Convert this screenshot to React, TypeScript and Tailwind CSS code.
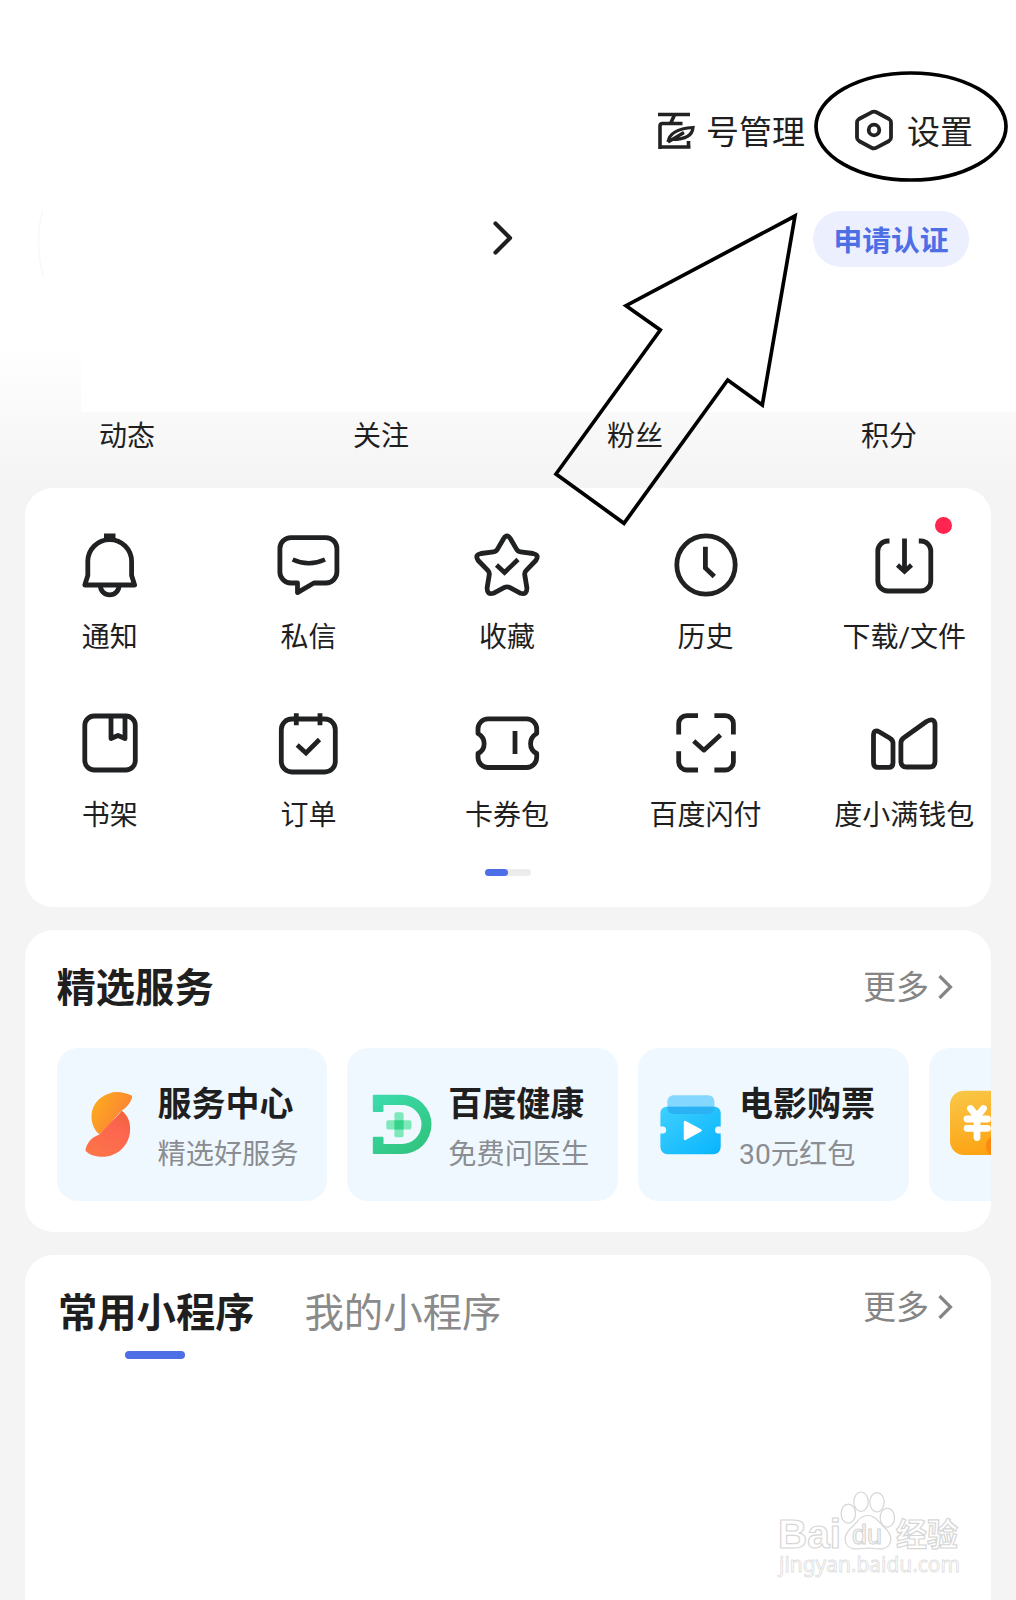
import type { ReactNode } from 'react';

const stroke = {
  fill: 'none',
  stroke: '#202122',
  strokeWidth: 4.8,
} as const;

function Glyph({ children }: { children: ReactNode }) {
  return (
    <svg className="size-[72px] shrink-0 overflow-visible" viewBox="0 0 72 72" {...stroke}>
      {children}
    </svg>
  );
}

const shortcuts: { label: string; icon: ReactNode; dot?: boolean }[] = [
  {
    label: '通知',
    icon: (
      <>
        <path d="M30 7.2h11.500" strokeWidth="5.500" />
        <path d="M10.800 56 13.800 46.500V32.500a21.900 21.900 0 0 1 43.800 0V46.500L60.600 56Z" strokeLinejoin="round" />
        <path d="M26.400 57a9.300 8.900 0 0 0 18.600 0" />
      </>
    ),
  },
  {
    label: '私信',
    icon: (
      <>
        <path
          d="M18.900 8.600H53.900a11 11 0 0 1 11 11V43a11 11 0 0 1-11 11H41.900L25.500 63.600V54H18.900a11 11 0 0 1-11-11V19.600a11 11 0 0 1 11-11Z"
          strokeLinejoin="round"
        />
        <path d="M20.700 30.500Q36.700 38.100 53 30.500" strokeWidth="4.600" />
      </>
    ),
  },
  {
    label: '收藏',
    icon: (
      <>
        <path
          d="M32.700 9.500Q36 4.500 39.300 9.500L45.500 20.100Q46.800 22.500 49.500 22.900L62 24.500Q68.700 26 64.800 31.500L55.300 41.300Q53.400 43.200 53.700 45.500L55.900 59Q56 66 49.700 64.300L38.500 58.400Q36 57.200 33.500 58.400L22.300 64.300Q16 66 16.100 59L18.300 45.500Q18.600 43.200 16.700 41.300L7.200 31.500Q3.300 26 10 24.500L22.500 22.900Q25.200 22.500 26.500 20.100Z"
          strokeLinejoin="round"
        />
        <path d="M25.500 36 33.500 43.500 47 30.500" strokeWidth="4.600" />
      </>
    ),
  },
  {
    label: '历史',
    icon: (
      <>
        <circle cx="36" cy="36" r="29.200" />
        <path d="M35.400 17.800V39L44.300 47.500" />
      </>
    ),
  },
  {
    label: '下载/文件',
    dot: true,
    icon: (
      <>
        <path d="M21.500 12H19.800a10 10 0 0 0-10 10V52a10 10 0 0 0 10 10H52.800a10 10 0 0 0 10-10V22a10 10 0 0 0-10-10H50.800" />
        <path d="M36.500 9.600V40" />
        <path d="M29.500 36 36.500 42.500 43.500 36" strokeWidth="4.500" />
      </>
    ),
  },
  {
    label: '书架',
    icon: (
      <>
        <rect x="10.800" y="9" width="50.500" height="54" rx="9.500" />
        <path d="M37 9V31.500L44 28.500 51 31.500V9" strokeLinejoin="round" />
      </>
    ),
  },
  {
    label: '订单',
    icon: (
      <>
        <rect x="9.300" y="12" width="54" height="53" rx="10.500" />
        <path d="M24.300 6.300v12M48 6.300v12" />
        <path d="M25.200 38 34 46 47.500 32.500" strokeWidth="4.600" />
      </>
    ),
  },
  {
    label: '卡券包',
    icon: (
      <>
        <path
          d="M17 11.900H55.700a10 10 0 0 1 10 10V26.500C57.500 31.200 57.500 42.200 65.700 46.500V50.500a10 10 0 0 1-10 10H17a10 10 0 0 1-10-10V46.500C15.200 42.200 15.200 31.200 7 26.500V21.900a10 10 0 0 1 10-10Z"
          strokeLinejoin="round"
        />
        <path d="M44 24v23" />
      </>
    ),
  },
  {
    label: '百度闪付',
    icon: (
      <>
        <path d="M8.700 27.600V16.600a8 8 0 0 1 8-8H28M44.400 8.600H55.400a8 8 0 0 1 8 8v11M8.700 44.300v10.700a8 8 0 0 0 8 8H28M44.400 63H55.400a8 8 0 0 0 8-8V44.300" />
        <path d="M23.700 34 33.900 43.200 50.500 28" strokeWidth="4.600" strokeLinejoin="round" />
      </>
    ),
  },
  {
    label: '度小满钱包',
    icon: (
      <>
        <path
          d="M5.500 28Q6 22 11.500 25L22 31.300Q25 33 25 36V55.700Q25 60.400 20.500 60.400H10Q5.500 60.400 5.500 55.700Z"
          strokeLinejoin="round"
        />
        <path
          d="M32.900 36Q32.900 33 35.500 31L58.500 14.500Q66.800 10 67 18V54.200Q67 60 61.500 60H38.500Q32.900 60 32.900 54.200Z"
          strokeLinejoin="round"
        />
      </>
    ),
  },
];

function ServiceIcon({ children }: { children: ReactNode }) {
  return (
    <svg className="size-[72px] shrink-0" viewBox="0 0 72 72">
      {children}
    </svg>
  );
}

const services: { title: string; sub: string; icon: ReactNode }[] = [
  {
    title: '服务中心',
    sub: '精选好服务',
    icon: (
      <>
        <defs>
          <linearGradient id="s1" x1="0" y1="0.200" x2="1" y2="0.800">
            <stop offset="0" stopColor="#fdac1c" />
            <stop offset="1" stopColor="#fb7a3d" />
          </linearGradient>
          <linearGradient id="s2" x1="0.900" y1="0" x2="0.300" y2="1">
            <stop offset="0" stopColor="#ee6238" />
            <stop offset="0.350" stopColor="#fd6550" />
            <stop offset="1" stopColor="#fc7448" />
          </linearGradient>
        </defs>
        <path d="M47.700 22.700C54 27 57 35 56 44C54.500 59 41 71 24 68.500Q16 67.500 11.700 63Q11 60 14.500 54.500Q18 49 25.500 46.500Q30 41 34 36Q43 29 47.700 22.700Z" fill="url(#s2)" />
        <path d="M57.700 7.600C50 4 42 2.800 35 5.400C23 9.500 17 19 17.500 30C18 37 21 43 25.500 46.500Q30 41 35 36.500C40 31 44.500 25.500 47.700 22.700Q55 18 57.900 10.500Q58.500 8.500 57.700 7.600Z" fill="url(#s1)" />
      </>
    ),
  },
  {
    title: '百度健康',
    sub: '免费问医生',
    icon: (
      <>
        <defs>
          <linearGradient id="d1" x1="0" y1="0" x2="0.700" y2="1">
            <stop offset="0" stopColor="#3bdcae" />
            <stop offset="1" stopColor="#31c47e" />
          </linearGradient>
        </defs>
        <path
          d="M8.800 8Q8.800 6.700 10 6.700H37.800a29.700 29.700 0 0 1 0 59.400H10Q8.800 66.100 8.800 65V50Q8.800 48.700 10 48.700H18.300Q19.500 48.700 19.500 50V56H38a19.500 19.500 0 0 0 0-39H19.500V23Q19.500 24 18.300 24H10Q8.800 24 8.800 23Z"
          fill="url(#d1)"
        />
        <rect x="22.300" y="32.200" width="25.200" height="9.300" rx="1.800" fill="#7ee8bb" />
        <rect x="30.400" y="24.300" width="9.200" height="25" rx="1.800" fill="#7ee8bb" />
        <rect x="30.400" y="32.200" width="9.200" height="9.300" fill="#35d48a" />
      </>
    ),
  },
  {
    title: '电影购票',
    sub: '30元红包',
    icon: (
      <>
        <defs>
          <linearGradient id="m1" x1="0" y1="0" x2="1" y2="1">
            <stop offset="0" stopColor="#3fd0ff" />
            <stop offset="1" stopColor="#08b4fd" />
          </linearGradient>
        </defs>
        <rect x="12.400" y="7.300" width="47" height="18.700" rx="6" fill="#84d8ff" />
        <path
          d="M11.400 18.700H59.700a6 6 0 0 1 6 6V38.500H62.500Q60 39 60 42Q60 45 62.500 45.500H65.700V59a7.300 7.300 0 0 1-7.300 7.300H12.700A7.300 7.300 0 0 1 5.400 59V45.500H8.600Q11.200 45 11.200 42Q11.200 39 8.600 38.500H5.400V24.700a6 6 0 0 1 6-6Z"
          fill="url(#m1)"
        />
        <path d="M12.400 18.700H59.400V20a6 6 0 0 1-6 6H18.400a6 6 0 0 1-6-6Z" fill="#2ab2f5" />
        <path d="M30 34 45.500 42.300 30 51Z" fill="#fff" stroke="#fff" strokeWidth="2.500" strokeLinejoin="round" />
      </>
    ),
  },
  {
    title: '',
    sub: '',
    icon: (
      <>
        <defs>
          <linearGradient id="y1" x1="0" y1="0" x2="0.300" y2="1">
            <stop offset="0" stopColor="#f9c84a" />
            <stop offset="1" stopColor="#fda414" />
          </linearGradient>
        </defs>
        <rect x="4" y="2.700" width="64" height="64.300" rx="14" fill="url(#y1)" />
        <circle cx="51" cy="58" r="11" fill="#fb8a10" />
        <path
          d="M24.500 20.500 31 28.500 37.500 20.500M21 31H41.500M21 40.300H41.500M31 29V49.500"
          fill="none"
          stroke="#fff"
          strokeWidth="6.800"
          strokeLinecap="round"
          strokeLinejoin="round"
        />
      </>
    ),
  },
];

function More() {
  return (
    <div className="flex items-center gap-[9px] text-[33px] leading-[48px] text-[#858585]">
      <span className="pt-[3px]">更多</span>
      <svg className="h-[26px] w-[15px]" viewBox="0 0 15 26" fill="none" stroke="#858585" strokeWidth="3.200">
        <path d="M1.500 2 12.500 13 1.500 24" />
      </svg>
    </div>
  );
}

function Watermark() {
  return (
    <svg
      className="absolute top-[1486px] left-[774px] h-[96px] w-[192px]"
      viewBox="0 0 192 96"
      fill="#fff"
      stroke="#d6d6d6"
      strokeWidth="1.200"
      fontFamily='"Liberation Sans", "Noto Sans CJK SC", sans-serif'
      fontWeight="bold"
    >
      <text x="4" y="62" fontSize="41" textLength="63" lengthAdjust="spacingAndGlyphs">Bai</text>
      <ellipse cx="74.300" cy="27.700" rx="7.200" ry="9.500" />
      <ellipse cx="87" cy="15.700" rx="7.200" ry="9.700" />
      <ellipse cx="103" cy="16.300" rx="7.200" ry="9.700" />
      <ellipse cx="113.300" cy="31.700" rx="7.200" ry="9.500" />
      <path d="M93.500 29.500C101 29.500 104 35 109 40C117 47 119 53 115 59C111 64.500 103 63 94 62C85 63 77 64.500 73 59C69 53 71 47 79 40C84 35 87 29.500 93.500 29.500Z" />
      <text x="78" y="58" fontSize="27" fontWeight="normal" textLength="30" lengthAdjust="spacingAndGlyphs">du</text>
      <text x="122" y="59.500" fontSize="32" textLength="62" lengthAdjust="spacingAndGlyphs">经验</text>
      <text x="5" y="86" fontSize="21.500" fontWeight="normal" strokeWidth="0.900" stroke="#dfdfdf" textLength="181" lengthAdjust="spacingAndGlyphs" fontFamily='"Noto Sans", sans-serif'>
        jingyan.baidu.com
      </text>
    </svg>
  );
}

export default function App() {
  return (
    <div className="relative flex h-[1600px] w-[1016px] flex-col overflow-hidden bg-[#f4f4f4] font-['Roboto','Noto_Sans_CJK_SC',sans-serif] text-[#1f1f1f]">
      <div className="h-[488px] shrink-0 bg-linear-to-b from-white from-[70%] to-[#f4f4f4]">
        <header className="ml-[81px] h-[412px] bg-white">
          <div className="flex h-[180px] items-center justify-end pt-[82px] pr-[43px] text-[33px] leading-[48px]">
            <svg className="mr-[9px] h-[40px] w-[40px]" viewBox="0 0 40 40" fill="none" stroke="#222" strokeWidth="3.600">
              <path d="M1 3.500H33M17.500 4 13.500 12.500M25.500 12.500H5.500Q3 12.500 3 15V38M1.500 36H33.500M31.500 30V37.500" />
              <path d="M11 31Q13 18 36 16.500Q35 28.500 15 28.500M11 31 27 21.500" strokeWidth="3.200" />
            </svg>
            <span className="pt-[3px]">号管理</span>
            <svg className="mr-[13px] mb-[2px] ml-[49px] h-[42px] w-[40px]" viewBox="0 0 40 42" fill="none" stroke="#222" strokeWidth="3.800">
              <path d="M17.500 3.300Q20 2 22.500 3.300L35 10Q37 11.300 37 13.500V28.500Q37 30.700 35 32L22.500 38.700Q20 40 17.500 38.700L5 32Q3 30.700 3 28.500V13.500Q3 11.300 5 10Z" />
              <circle cx="20" cy="21" r="5.300" />
            </svg>
            <span className="pt-[3px]">设置</span>
          </div>
          <div className="flex h-[118px] items-center justify-between pr-[47px]">
            <svg className="mb-[2px] ml-[410px] h-[36px] w-[24px]" viewBox="0 0 24 36" fill="none" stroke="#1f1f1f" strokeWidth="4.200" strokeLinecap="round" strokeLinejoin="round">
              <path d="M4.500 3.500 19 18 4.500 32.500" />
            </svg>
            <div className="h-[56px] w-[156px] rounded-full bg-[#ebeffe] text-center text-[28.800px] leading-[60px] font-bold text-[#4e6ee6]">
              申请认证
            </div>
          </div>
        </header>
        <nav className="grid h-[76px] grid-cols-4 pt-[5px] text-center text-[28px] leading-[40px]">
          <span>动态</span>
          <span>关注</span>
          <span>粉丝</span>
          <span>积分</span>
        </nav>
      </div>

      <main className="flex flex-1 flex-col gap-[23px] px-[25px]">
        <section className="h-[419px] shrink-0 overflow-hidden rounded-[28px] bg-white">
          <div className="-ml-[14.500px] grid w-[993px] grid-cols-5 gap-y-[50px] pt-[41px]">
            {shortcuts.map((item) => (
              <div key={item.label} className="relative flex h-[128px] flex-col items-center">
                <Glyph>{item.icon}</Glyph>
                {item.dot && <i className="absolute -top-[12px] left-[130px] size-[17px] rounded-full bg-[#ff2550]" />}
                <span className="mt-[17px] text-[28px] leading-[40px] whitespace-nowrap">{item.label}</span>
              </div>
            ))}
          </div>
          <div className="mx-auto mt-[34px] h-[7px] w-[46px] rounded-full bg-[#ececec]">
            <div className="h-[7px] w-[23px] rounded-full bg-[#4e6ee6]" />
          </div>
        </section>

        <section className="h-[301.500px] shrink-0 overflow-hidden rounded-[28px] bg-white pl-[31.500px]">
          <div className="flex h-[118px] items-center justify-between pr-[38px] pb-[5px]">
            <h2 className="pt-[4px] text-[39.300px] leading-[56px] font-bold">精选服务</h2>
            <More />
          </div>
          <div className="flex gap-[20.300px]">
            {services.map((s, i) => (
              <div key={i} className="flex h-[152.500px] w-[270.500px] shrink-0 items-center gap-[12px] rounded-[21px] bg-[#f0f8ff] pl-[17px]">
                <ServiceIcon>{s.icon}</ServiceIcon>
                <div className="pt-[7px] whitespace-nowrap">
                  <div className="text-[34px] leading-[50px] font-bold">{s.title}</div>
                  <div className="mt-[5px] text-[28.200px] leading-[42px] text-[#8a8d91]">{s.sub}</div>
                </div>
              </div>
            ))}
          </div>
        </section>

        <section className="h-[400px] shrink-0 rounded-t-[28px] bg-white pl-[33px]">
          <div className="flex h-[112px] items-center pr-[38px]">
            <div className="pt-[6px] text-[39.300px] leading-[56px] font-bold">常用小程序</div>
            <div className="mr-auto ml-[50px] pt-[6px] text-[39.400px] leading-[56px] text-[#8a8a8a]">我的小程序</div>
            <div className="mb-[8px]">
              <More />
            </div>
          </div>
          <div className="-mt-[16px] ml-[67px] h-[8px] w-[60px] rounded-full bg-[#4e6ee6]" />
        </section>
      </main>

      <svg className="pointer-events-none absolute top-0 left-0 h-[560px] w-[1016px]" viewBox="0 0 1016 560" fill="none" stroke="#000">
        <path d="M43 210Q34 240 43 276" stroke="#f8f8f8" strokeWidth="1.500" />
        <ellipse cx="911" cy="126.500" rx="95" ry="53.500" strokeWidth="3.700" />
        <path d="M795 216 626 305.700 660.300 330 556 474 624 523.300 727.700 380 762.300 405Z" strokeWidth="3.700" />
      </svg>
      <Watermark />
    </div>
  );
}
